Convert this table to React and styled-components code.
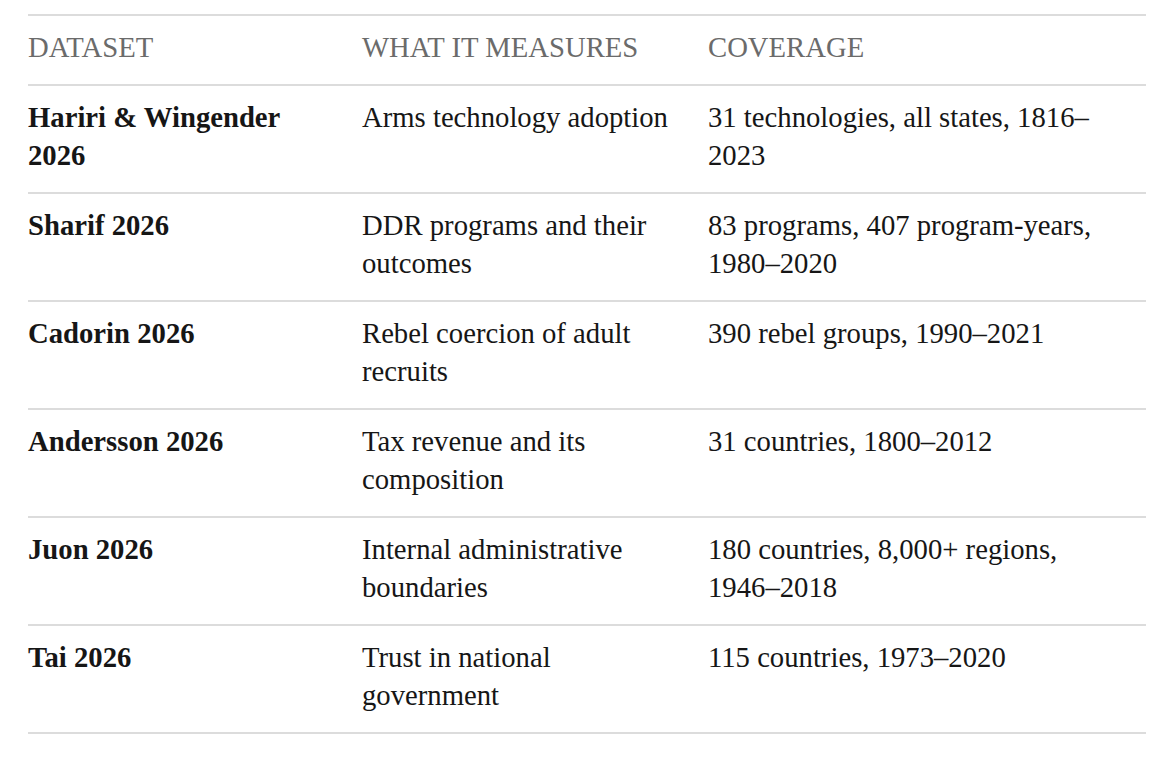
import styled, { createGlobalStyle } from "styled-components"

const rows = [
    { name: "Hariri & Wingender 2026", measures: "Arms technology adoption", coverage: "31 technologies, all states, 1816–2023" },
    { name: "Sharif 2026", measures: "DDR programs and their outcomes", coverage: "83 programs, 407 program-years, 1980–2020" },
    { name: "Cadorin 2026", measures: "Rebel coercion of adult recruits", coverage: "390 rebel groups, 1990–2021" },
    { name: "Andersson 2026", measures: "Tax revenue and its composition", coverage: "31 countries, 1800–2012" },
    { name: "Juon 2026", measures: "Internal administrative boundaries", coverage: "180 countries, 8,000+ regions, 1946–2018" },
    { name: "Tai 2026", measures: "Trust in national government", coverage: "115 countries, 1973–2020" },
]

const GlobalStyle = createGlobalStyle`
    * { box-sizing: border-box; }
    body {
        margin: 0;
        background: #ffffff;
        font-family: "Liberation Serif", "Times New Roman", serif;
    }
`

export default function App() {
    return (
        <Page>
            <GlobalStyle />
            <Table>
                <colgroup>
                    <col style={{ width: 334 }} />
                    <col style={{ width: 346 }} />
                    <col />
                </colgroup>
                <thead>
                    <tr>
                        <HeadCell>DATASET</HeadCell>
                        <HeadCell>WHAT IT MEASURES</HeadCell>
                        <HeadCell>COVERAGE</HeadCell>
                    </tr>
                </thead>
                <tbody>
                    {rows.map((row) => (
                        <tr key={row.name}>
                            <Cell bold>{row.name}</Cell>
                            <Cell>{row.measures}</Cell>
                            <Cell>{row.coverage}</Cell>
                        </tr>
                    ))}
                </tbody>
            </Table>
        </Page>
    )
}

const Page = styled.div`
    padding: 14px 22px 0 28px;
`
const Table = styled.table`
    width: 100%;
    border-collapse: collapse;
    table-layout: fixed;
    border-top: 2px solid #dcdcdc;
    font-size: 28.7px;
    line-height: 38px;
`
const HeadCell = styled.th`
    text-align: left;
    font-weight: normal;
    color: #6b6b6b;
    padding: 12px 36px 18px 0;
    border-bottom: 2px solid #dcdcdc;
    vertical-align: top;

    &:last-child {
        padding-right: 42px;
    }
`
const Cell = styled.td`
    color: #161616;
    font-weight: ${(props) => (props.bold ? "bold" : "normal")};
    padding: 12px 36px 18px 0;
    border-bottom: 2px solid #dcdcdc;
    vertical-align: top;

    &:last-child {
        padding-right: 42px;
    }
`
